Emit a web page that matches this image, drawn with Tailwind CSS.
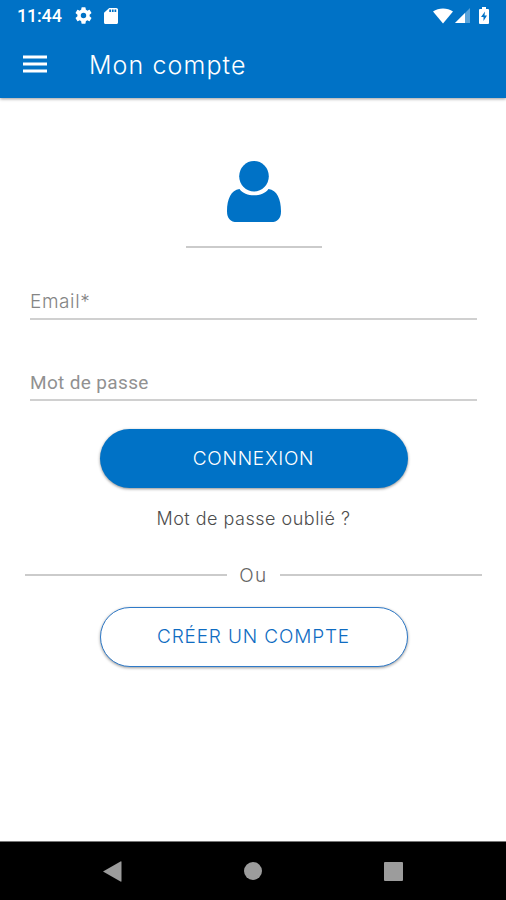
<!DOCTYPE html>
<html lang="fr">
<head>
  <meta charset="UTF-8" />
  <meta name="viewport" content="width=device-width, initial-scale=1.0"/>
  <script src="https://cdn.jsdelivr.net/npm/@tailwindcss/browser@4"></script>
  <title>Mon compte</title>
</head>
<body class="bg-white font-['Inter',sans-serif] font-light">
  <div class="flex h-[900px] w-[506px] flex-col overflow-hidden">
    <!-- App bar -->
    <header class="h-[98px] shrink-0 bg-[#0072c6] text-white shadow-[0_1px_3px_rgba(0,0,0,0.4)]">
      <div class="flex h-[31px] items-center pl-[17px] pr-[17px]">
        <span class="w-[58px] font-['Roboto',sans-serif] text-[18px] font-medium leading-[31px] tracking-[-0.2px]">11:44</span>
        <svg class="h-[17px] w-[17px]" viewBox="2 2 20 20" fill="currentColor" aria-hidden="true">
          <path d="M19.14 12.94a7.07 7.07 0 0 0 0-1.88l2.03-1.58a.5.5 0 0 0 .12-.61l-1.92-3.32a.49.49 0 0 0-.59-.22l-2.39.96a7 7 0 0 0-1.62-.94l-.36-2.54a.48.48 0 0 0-.48-.41h-3.84a.47.47 0 0 0-.47.41l-.36 2.54c-.59.24-1.13.57-1.62.94l-2.39-.96a.47.47 0 0 0-.59.22L2.74 8.87a.47.47 0 0 0 .12.61l2.03 1.58a7 7 0 0 0 0 1.88l-2.03 1.58a.5.5 0 0 0-.12.61l1.92 3.32c.12.22.37.29.59.22l2.39-.96c.5.38 1.03.7 1.62.94l.36 2.54c.05.24.24.41.48.41h3.84c.24 0 .44-.17.47-.41l.36-2.54a6.8 6.8 0 0 0 1.62-.94l2.39.96c.22.08.47 0 .59-.22l1.92-3.32a.47.47 0 0 0-.12-.61zM12 15.2a3.2 3.2 0 1 1 0-6.4 3.2 3.2 0 0 1 0 6.4z" />
        </svg>
        <svg class="ml-[12px] h-4 w-[14px]" viewBox="4 2 16 20" preserveAspectRatio="none" fill="currentColor" aria-hidden="true">
          <path d="M18 2h-8L4.02 8 4 20c0 1.1.9 2 2 2h12c1.1 0 2-.9 2-2V4c0-1.1-.9-2-2-2zm-6 5h-2V4h2v3zm3 0h-2V4h2v3zm3 0h-2V4h2v3z" />
        </svg>
        <svg class="ml-auto h-4 w-5" viewBox="0 0 20 16" fill="currentColor" aria-hidden="true">
          <path d="M0 3.5C5.5-.6 14.500-.6 20 3.5L10 15.5z" />
        </svg>
        <svg class="ml-[2px] h-[15px] w-[15px]" viewBox="0 0 15 15" fill="currentColor" aria-hidden="true">
          <path d="M0 15 15 0v15z" fill-opacity=".35" />
          <path d="M0 15 10 5v10z" />
        </svg>
        <svg class="ml-[9px] h-[17px] w-[10px]" viewBox="0 0 10 17" aria-hidden="true">
          <path d="M3 0h4v2h2q1 0 1 1v13q0 1-1 1H1q-1 0-1-1V3q0-1 1-1h2z" fill="white" />
          <path d="M6 4.5 2 10h2.5v4L8 8.500H5.5z" fill="#0072c6" />
        </svg>
      </div>
      <div class="flex h-[66px] items-center pl-[23px]">
        <svg class="h-[18px] w-6" viewBox="0 0 24 18" fill="currentColor" aria-hidden="true">
          <path d="M0 .5h24v3H0zM0 7.500h24v3H0zM0 14.500h24v3H0z" />
        </svg>
        <h1 class="ml-[42px] mt-[2px] whitespace-nowrap text-[25px] leading-8 tracking-[1.1px]">Mon compte</h1>
      </div>
    </header>

    <!-- Login form -->
    <main class="flex flex-1 flex-col pl-px">
      <svg class="mx-auto mt-[63px] h-[61px] w-[54px]" viewBox="0 0 54 62" preserveAspectRatio="none" fill="#0072c6" aria-hidden="true">
        <ellipse cx="27" cy="15.5" rx="14.8" ry="15.5" />
        <path d="M12.500 28.500C18 37 36 37 41.500 28.500C50 29.500 54 39 54 51Q54 62 44 62H10Q0 62 0 51C0 39 4 29.500 12.500 28.500z" />
      </svg>
      <div class="mx-auto mt-[24px] h-[2px] w-[136px] bg-[#cbcbcb]"></div>

      <div class="ml-[29px] mr-[29px] mt-[40px] h-8 border-b-2 border-[#d0d0d0] text-[19px] leading-[28px] tracking-[0.6px] text-[#858585]">Email*</div>
      <div class="ml-[29px] mr-[29px] mt-[49px] h-8 border-b-2 border-[#d0d0d0] font-['Roboto',sans-serif] text-[19px] font-normal leading-[27px] tracking-[0.35px] text-[#919191]">Mot de passe</div>

      <button class="mx-auto mt-[28px] h-[59px] w-[308px] rounded-full bg-[#0072c6] text-[19px] font-normal tracking-[0.75px] text-white shadow-[0_1px_3px_rgba(0,0,0,0.45)]"><span class="mt-[2px] block font-light">CONNEXION</span></button>
      <a href="#" class="mx-auto mt-[18px] whitespace-nowrap text-[18px] leading-[26px] tracking-[0.5px] text-[#4d4d4d]">Mot de passe oublié ?</a>

      <div class="mt-[29px] flex h-[28px] items-center pl-[24px] pr-[24px]">
        <div class="h-[2px] flex-1 bg-[#cbcbcb]"></div>
        <span class="w-[53px] pt-[2px] text-center text-[19px] leading-7 tracking-[1.5px] text-[#666]">Ou</span>
        <div class="h-[2px] flex-1 bg-[#cbcbcb]"></div>
      </div>

      <button class="mx-auto mt-[18px] h-[60px] w-[308px] whitespace-nowrap rounded-full border-[1.5px] border-[#2f7ac8] bg-white text-[19px] tracking-[0.85px] text-[#0f6cc2] shadow-[0_1px_3px_rgba(0,0,0,0.4)]"><span class="mt-px block">CRÉER UN COMPTE</span></button>
    </main>

    <!-- Navigation bar -->
    <nav class="flex h-[59px] shrink-0 items-center justify-between border-t border-[#777] bg-black pl-[103px] pr-[103px] text-[#9c9c9c]">
      <svg class="h-[21px] w-[19px]" viewBox="0 0 19 21" fill="currentColor" aria-hidden="true">
        <path d="M0 10.500 17.500.5Q18.500 0 18.500 1v19q0 1-1 .5z" />
      </svg>
      <div class="h-[18px] w-[18px] rounded-full bg-[#9c9c9c]"></div>
      <div class="h-[19px] w-[19px] rounded-[1px] bg-[#9c9c9c]"></div>
    </nav>
  </div>
</body>
</html>
